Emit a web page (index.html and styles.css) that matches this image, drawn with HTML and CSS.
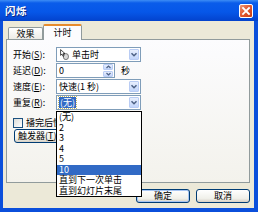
FILE: index.html
```html
<!DOCTYPE html>
<html>
<head>
<meta charset="utf-8">
<link rel="stylesheet" href="styles.css">
</head>
<body>
<div class="window">
  <div class="titlebar">
    <span class="title">闪烁</span>
    <span class="close"><svg width="12" height="12" viewBox="0 0 12 12"><path d="M3 3L9 9M9 3L3 9" stroke="#fff" stroke-width="1.8" stroke-linecap="square"/></svg></span>
  </div>
  <div class="client">
    <div class="tabs">
      <div class="tab">效果</div>
      <div class="tab active">计时</div>
    </div>
    <div class="panel">
      <div class="row">
        <span class="label">开始(<u>S</u>):</span>
        <div class="combo">
          <svg class="mouse" width="9" height="11" viewBox="0 0 9 11"><rect x="3.4" y="4.6" width="5" height="6" rx="2.5" fill="#D9D9D9" stroke="#5A5A5A" stroke-width="0.8"/><path d="M0.6 0.6L0.6 6.4L2 5.1L3 7.3L4 6.8L3 4.7L5 4.6Z" fill="#fff" stroke="#000" stroke-width="0.7"/></svg>
          <span class="val">单击时</span>
          <span class="arrow"><svg width="10" height="11" viewBox="0 0 10 11"><path d="M2.5 4.2L5 6.7L7.5 4.2" fill="none" stroke="#4D6185" stroke-width="1.5"/></svg></span>
        </div>
      </div>
      <div class="row">
        <span class="label">延迟(<u>D</u>):</span>
        <div class="spin">
          <span class="val">0</span>
          <span class="spinbtns">
            <span class="sb"><svg width="9" height="6" viewBox="0 0 9 6"><path d="M2.5 4L4.5 2L6.5 4" fill="none" stroke="#4D6185" stroke-width="1.2"/></svg></span>
            <span class="sb"><svg width="9" height="6" viewBox="0 0 9 6"><path d="M2.5 2L4.5 4L6.5 2" fill="none" stroke="#4D6185" stroke-width="1.2"/></svg></span>
          </span>
        </div>
        <span class="unit">秒</span>
      </div>
      <div class="row">
        <span class="label">速度(<u>E</u>):</span>
        <div class="combo">
          <span class="val">快速(1 秒)</span>
          <span class="arrow"><svg width="10" height="11" viewBox="0 0 10 11"><path d="M2.5 4.2L5 6.7L7.5 4.2" fill="none" stroke="#4D6185" stroke-width="1.5"/></svg></span>
        </div>
      </div>
      <div class="row">
        <span class="label">重复(<u>R</u>):</span>
        <div class="combo">
          <span class="val sel">(无)</span>
          <span class="arrow"><svg width="10" height="11" viewBox="0 0 10 11"><path d="M2.5 4.2L5 6.7L7.5 4.2" fill="none" stroke="#4D6185" stroke-width="1.5"/></svg></span>
        </div>
      </div>
      <div class="check-row">
        <span class="checkbox"></span>
        <span class="check-label">播完后快退(<u>W</u>)</span>
      </div>
      <div class="trigger">触发器(<u>T</u>) ▼</div>
    </div>
    <div class="buttons">
      <div class="btn default">确定</div>
      <div class="btn">取消</div>
    </div>
  </div>
  <div class="dropdown">
    <div class="item">(无)</div>
    <div class="item">2</div>
    <div class="item">3</div>
    <div class="item">4</div>
    <div class="item">5</div>
    <div class="item hl">10</div>
    <div class="item">直到下一次单击</div>
    <div class="item">直到幻灯片末尾</div>
  </div>
</div>
</body>
</html>
```

FILE: styles.css
```css
* { box-sizing: border-box; }
html, body { margin: 0; padding: 0; }
body {
  width: 258px;
  height: 212px;
  overflow: hidden;
  font-family: "Noto Sans CJK SC", "Noto Sans", sans-serif;
  font-size: 9px;
  color: #000;
  background: #fff;
}
.window {
  position: relative;
  width: 258px;
  height: 212px;
  background: #0B4FDB;
  display: flex;
  flex-direction: column;
}
.titlebar {
  height: 21px;
  flex: none;
  display: flex;
  align-items: center;
  padding: 0 5px 0 5px;
  background: linear-gradient(#3D8DF5 0, #0A5CEA 3px, #0657E8 12px, #0449D6 18px, #0343CC 21px);
}
.title {
  color: #fff;
  font-weight: bold;
  font-size: 10.5px;
  line-height: 12px;
  text-shadow: 1px 1px 0 #0A2A88;
  letter-spacing: 0.5px;
}
.close {
  margin-left: auto;
  width: 14px;
  height: 14px;
  border: 1px solid #fff;
  border-radius: 2px;
  background: linear-gradient(135deg, #EC9A7A 0%, #E25A33 45%, #C63D13 100%);
  display: flex;
  align-items: center;
  justify-content: center;
}
.client {
  flex: 1;
  margin: 0 4px 4px 3px;
  background: #ECE9D8;
  padding-top: 3px;
  display: flex;
  flex-direction: column;
}
.tabs {
  height: 15px;
  display: flex;
  align-items: flex-end;
  padding-left: 5px;
}
.tab {
  width: 35px;
  height: 12px;
  border: 1px solid #919B9C;
  border-bottom: none;
  border-radius: 2px 2px 0 0;
  background: linear-gradient(#FFFFFF, #ECEBE6);
  text-align: center;
  line-height: 11px;
}
.tab.active {
  width: 39px;
  height: 16px;
  margin-bottom: -1px;
  border-top: 2px solid #E68B2C;
  background: #FCFCFE;
  position: relative;
  z-index: 1;
  line-height: 13px;
}
.panel {
  margin-left: 3px;
  width: 244px;
  height: 144px;
  border: 1px solid #919B9C;
  background: linear-gradient(#FCFCFE, #F3F2EC);
  padding: 7px 0 0 6px;
  display: flex;
  flex-direction: column;
}
.row {
  display: flex;
  align-items: center;
  height: 15px;
  margin-bottom: 1px;
}
.label {
  width: 43px;
  line-height: 15px;
  white-space: nowrap;
}
u { text-decoration: underline; text-underline-offset: 1px; }
.combo, .spin {
  height: 15px;
  border: 1px solid #7F9DB9;
  background: #fff;
  display: flex;
  align-items: center;
  padding-left: 2px;
}
.combo { width: 85px; }
.spin { width: 59px; }
.mouse { margin: 0 3px 0 1px; }
.val {
  line-height: 11px;
  white-space: nowrap;
}
.val.sel {
  background: #316AC5;
  color: #fff;
  padding: 0 1px;
  outline: 1px dotted #C8B860;
}
.arrow {
  margin-left: auto;
  margin-right: 1px;
  width: 10px;
  height: 11px;
  border: 1px solid #B9CCF4;
  border-radius: 1px;
  background: linear-gradient(#E8EFFD, #C2D5FB);
  display: flex;
  align-items: center;
  justify-content: center;
}
.arrow svg { flex: none; }
.spinbtns {
  margin-left: auto;
  margin-right: 1px;
  width: 10px;
  height: 13px;
  display: flex;
  flex-direction: column;
  gap: 1px;
}
.sb {
  height: 6px;
  border: 1px solid #B9CCF4;
  border-radius: 1px;
  background: linear-gradient(#E8EFFD, #C2D5FB);
  display: flex;
  align-items: center;
  justify-content: center;
}
.sb svg { flex: none; }
.unit { margin-left: 6px; line-height: 15px; }
.check-row {
  margin-top: 6px;
  height: 11px;
  display: flex;
  align-items: center;
}
.checkbox {
  flex: none;
  width: 10px;
  height: 10px;
  border: 1px solid #1C5180;
  background: linear-gradient(135deg, #DCDCD7, #FFFFFF);
}
.check-label {
  margin-left: 3px;
  line-height: 11px;
  white-space: nowrap;
}
.trigger {
  margin-top: 1px;
  margin-left: 1px;
  width: 66px;
  height: 14px;
  border: 1px solid #003C74;
  border-radius: 3px;
  background: linear-gradient(#FFFFFF, #F0F0EA 70%, #D6D0C5);
  line-height: 12px;
  padding-left: 3px;
  white-space: nowrap;
}
.buttons {
  margin-top: 6px;
  display: flex;
  justify-content: flex-end;
  gap: 6px;
  padding-right: 4px;
}
.btn {
  width: 54px;
  height: 14px;
  border: 1px solid #003C74;
  border-radius: 3px;
  background: linear-gradient(#FFFFFF, #F0F0EA 70%, #D6D0C5);
  text-align: center;
  line-height: 12px;
}
.btn.default {
  box-shadow: inset 0 0 0 1px #A8C6F3;
}
.dropdown {
  position: absolute;
  left: 56px;
  top: 111px;
  width: 86px;
  height: 86px;
  border: 1px solid #000;
  background: #fff;
  z-index: 5;
}
.item {
  height: 10.5px;
  line-height: 10.5px;
  padding-left: 2px;
  white-space: nowrap;
}
.item.hl {
  background: #316AC5;
  color: #fff;
}
```
